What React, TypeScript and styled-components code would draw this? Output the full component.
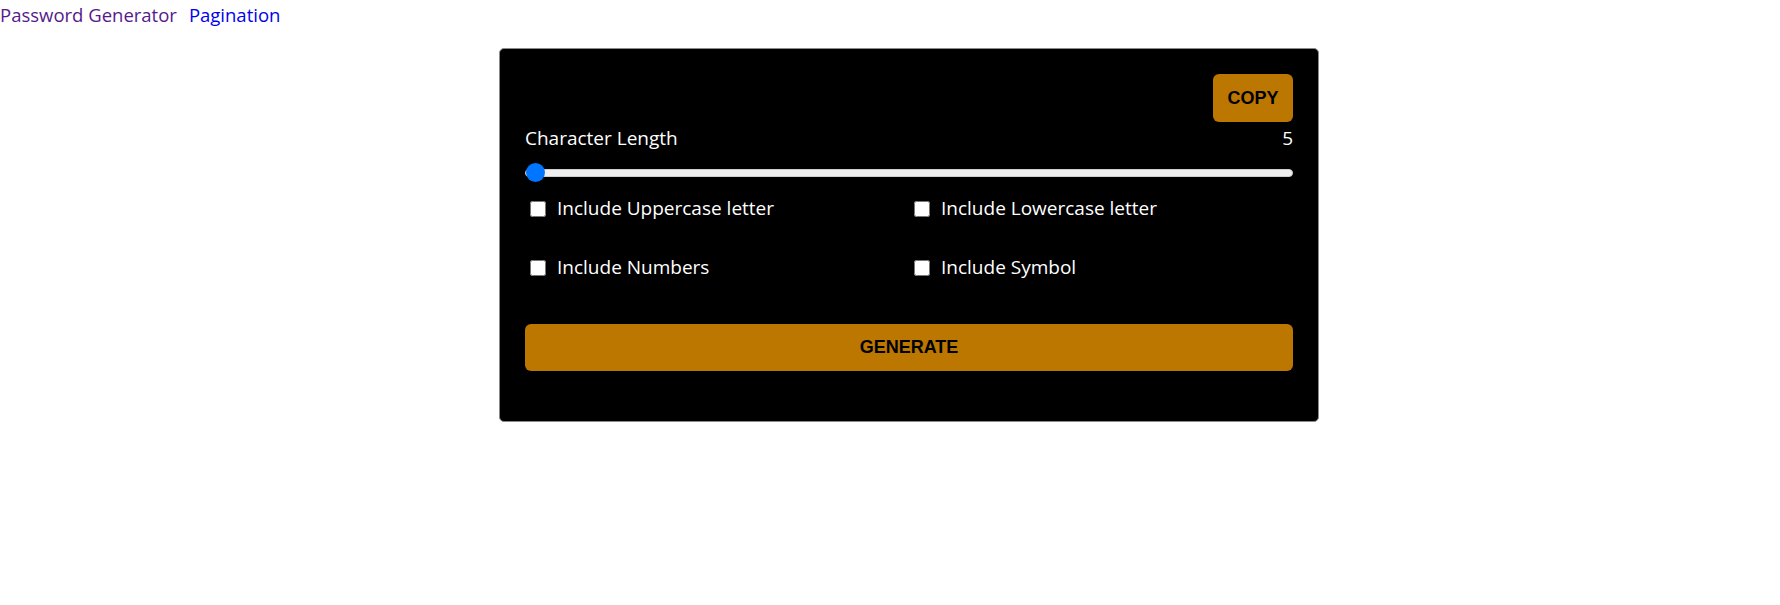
import React, { useState } from 'react'
import styled, { createGlobalStyle } from 'styled-components'

const GlobalStyle = createGlobalStyle`
  html, body {
    margin: 0;
    padding: 0;
    background: #fff;
  }
  body {
    font-family: "Open Sans", "Noto Sans", sans-serif;
    font-size: 19px;
  }
`

const Nav = styled.nav`
  display: flex;
  gap: 12px;
  height: 28px;
  align-items: center;
`

const NavLink = styled.a<{ $visited?: boolean }>`
  color: ${(p) => (p.$visited ? '#551a8b' : '#0000ee')};
  text-decoration: none;
  font-size: 18.5px;
  line-height: 27px;
`

const Main = styled.main`
  display: flex;
  justify-content: center;
  padding-left: 38px;
  padding-top: 20px;
`

const Card = styled.div`
  width: 820px;
  box-sizing: border-box;
  background: #000;
  border: 1px solid #8a8a8a;
  border-radius: 5px;
  padding: 25px 25px 50px;
  color: #fff;
`

const TopRow = styled.div`
  display: flex;
  justify-content: space-between;
  align-items: center;
`

const Password = styled.span`
  font-size: 19px;
  color: #fff;
`

const ActionButton = styled.button<{ $wide?: boolean }>`
  display: flex;
  align-items: center;
  justify-content: center;
  width: ${(p) => (p.$wide ? '100%' : '80px')};
  height: ${(p) => (p.$wide ? '47px' : '48px')};
  background: #bb7700;
  color: #000;
  border: none;
  border-radius: 6px;
  font-family: "Liberation Sans", Arial, sans-serif;
  font-weight: 700;
  font-size: 18px;
  text-transform: uppercase;
  cursor: pointer;
  padding: 0;
`

const LengthRow = styled.div`
  display: flex;
  justify-content: space-between;
  line-height: 27px;
  margin-top: 3px;
`

const Slider = styled.input`
  -webkit-appearance: none;
  appearance: none;
  display: block;
  width: 100%;
  height: 19px;
  margin: 11px 0 0;
  background: transparent;

  &::-webkit-slider-runnable-track {
    height: 8px;
    background: #efefef;
    border: 1px solid #cfcfcf;
    border-radius: 5px;
  }
  &::-webkit-slider-thumb {
    -webkit-appearance: none;
    width: 19px;
    height: 19px;
    margin-top: -6.5px;
    border-radius: 50%;
    background: #0075ff;
    border: none;
  }
`

const Options = styled.div`
  display: grid;
  grid-template-columns: 1fr 1fr;
  row-gap: 32px;
  margin-top: 13px;
`

const Option = styled.label`
  display: flex;
  align-items: center;
  line-height: 27px;
  gap: 11px;
  cursor: pointer;
`

const Check = styled.input`
  width: 16px;
  height: 16px;
  margin: 0 0 0 5px;
  accent-color: #0075ff;
`

const Footer = styled.div`
  margin-top: 43px;
`

const options = [
  'Include Uppercase letter',
  'Include Lowercase letter',
  'Include Numbers',
  'Include Symbol',
]

export default function App() {
  const [length, setLength] = useState(5)
  const [checked, setChecked] = useState<boolean[]>([false, false, false, false])

  return (
    <>
      <GlobalStyle />
      <Nav>
        <NavLink href="#" $visited>Password Generator</NavLink>
        <NavLink href="#">Pagination</NavLink>
      </Nav>
      <Main>
        <Card>
          <TopRow>
            <Password></Password>
            <ActionButton>Copy</ActionButton>
          </TopRow>
          <LengthRow>
            <span>Character Length</span>
            <span>{length}</span>
          </LengthRow>
          <Slider
            type="range"
            min={5}
            max={20}
            value={length}
            onChange={(e) => setLength(Number(e.target.value))}
          />
          <Options>
            {options.map((label, i) => (
              <Option key={label}>
                <Check
                  type="checkbox"
                  checked={checked[i]}
                  onChange={() => setChecked(checked.map((c, j) => (j === i ? !c : c)))}
                />
                {label}
              </Option>
            ))}
          </Options>
          <Footer>
            <ActionButton $wide>Generate</ActionButton>
          </Footer>
        </Card>
      </Main>
    </>
  )
}
